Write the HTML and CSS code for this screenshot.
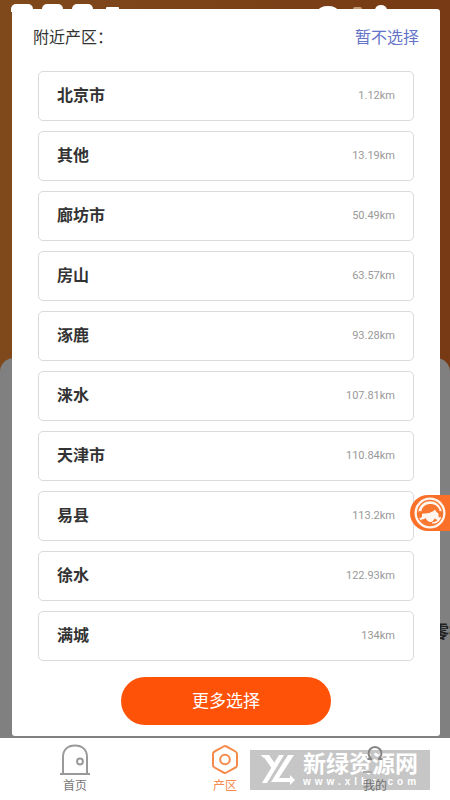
FILE: index.html
```
<!DOCTYPE html>
<html lang="zh-CN">
<head>
<meta charset="utf-8">
<meta name="viewport" content="width=device-width, initial-scale=1">
<title>附近产区</title>
<link rel="stylesheet" href="styles.css">
</head>
<body>
<main class="stage">
  <div class="sheet"></div>
  <svg class="status" viewBox="0 0 450 12" preserveAspectRatio="none" aria-hidden="true">
    <g fill="#fff">
      <rect x="11" y="4" width="22" height="12" rx="5"/>
      <rect x="42" y="4" width="21" height="12" rx="5"/>
      <rect x="72" y="4" width="21" height="12" rx="5"/>
      <rect x="106" y="7" width="13" height="5" rx="1"/>
      <ellipse cx="328" cy="11" rx="10" ry="5"/>
      <ellipse cx="381" cy="10" rx="6" ry="5"/>
    </g>
    <rect x="353" y="7" width="9" height="4" rx="2" fill="#c29b7c"/>
  </svg>
  <span class="peek">零担</span>
  <section class="dialog" role="dialog" aria-labelledby="dialog-title">
    <header class="dialog-head">
      <h1 id="dialog-title">附近产区：</h1>
      <button class="skip" type="button">暂不选择</button>
    </header>
    <ul class="areas">
      <li><button class="area" type="button"><b>北京市</b><span>1.12km</span></button></li>
      <li><button class="area" type="button"><b>其他</b><span>13.19km</span></button></li>
      <li><button class="area" type="button"><b>廊坊市</b><span>50.49km</span></button></li>
      <li><button class="area" type="button"><b>房山</b><span>63.57km</span></button></li>
      <li><button class="area" type="button"><b>涿鹿</b><span>93.28km</span></button></li>
      <li><button class="area" type="button"><b>涞水</b><span>107.81km</span></button></li>
      <li><button class="area" type="button"><b>天津市</b><span>110.84km</span></button></li>
      <li><button class="area" type="button"><b>易县</b><span>113.2km</span></button></li>
      <li><button class="area" type="button"><b>徐水</b><span>122.93km</span></button></li>
      <li><button class="area" type="button"><b>满城</b><span>134km</span></button></li>
    </ul>
    <button class="more" type="button">更多选择</button>
  </section>
  <button class="service" type="button" aria-label="客服">
    <svg viewBox="0 0 32 32" aria-hidden="true">
      <circle cx="16" cy="16" r="15.500" fill="#fff7ef"/>
      <circle cx="16" cy="16" r="13.200" fill="#f9762f"/>
      <circle cx="16" cy="16" r="11.800" fill="#fff7ef"/>
      <path d="M7 17c0-6.500 4-10 9.500-10S26 10.500 26 17c-2-.5-4-2-5-4.500C18.500 15.500 13.500 16.500 10 16.500z" fill="#f9762f"/>
      <path d="M6.500 23c2.500-.5 4-1 5-2 1.500 2.500 3 4 5 4s3-1.500 4-3.500l3 1.500c-1.500 3-4 5-7.500 5s-7-1.500-9.500-5z" fill="#f9762f"/>
      <rect x="4" y="14" width="4" height="7" rx="2" fill="#f9762f"/>
      <rect x="24.500" y="14" width="4" height="7" rx="2" fill="#f9762f"/>
      <path d="M26.500 20c-1 3.500-4 5.800-8.500 5.800" fill="none" stroke="#fff7ef" stroke-width="1.300"/>
    </svg>
  </button>
</main>
<nav class="tabs">
  <a class="tab" href="#home">
    <svg viewBox="0 0 32 32" fill="none" stroke="#999" stroke-width="2" aria-hidden="true">
      <path d="M1 30h30M4 30V13C4 6 8.500 1.500 16 1.500S28 6 28 13v17"/>
      <circle cx="21" cy="17.500" r="2.900"/>
    </svg>
    <span>首页</span>
  </a>
  <a class="tab tab-on" href="#area" aria-current="page">
    <svg viewBox="0 0 32 32" fill="none" stroke="#f58b4b" stroke-width="2" stroke-linejoin="round" aria-hidden="true">
      <path d="M14.500 2.500q1.500-.8 3 0l9 5q1.500.8 1.500 2.500v11q0 1.700-1.500 2.500l-9 5q-1.500.8-3 0l-9-5Q4 22.700 4 21V10q0-1.700 1.500-2.500z"/>
      <circle cx="16" cy="15.500" r="4.800"/>
    </svg>
    <span>产区</span>
  </a>
  <a class="tab tab-mine" href="#mine">
    <svg viewBox="0 0 32 32" fill="none" stroke="#858585" stroke-width="2" aria-hidden="true">
      <path d="M12.500 15a6.500 6.500 0 1 1 7 0M8.500 15h4.500M19 15h4.500"/>
      <path d="M4 28h9" stroke="#aaa"/>
    </svg>
    <span>我的</span>
  </a>
</nav>
<aside class="mark">
  <svg viewBox="0 0 36 32" aria-hidden="true">
    <g fill="#fff">
      <path d="M1 1h8l7 10-3 5L4.500 4z"/>
      <path d="M19 1h5L7 29H2z"/>
      <path d="M28 1h6L19 24h11v-3l5 5-5 5v-3H11z"/>
      <path d="M1 1h8l1.500 2.500H3z"/>
    </g>
  </svg>
  <div class="mark-text"><strong>新绿资源网</strong><small>www.xlhs.com</small></div>
</aside>
</body>
</html>
```
FILE: styles.css
```
* { box-sizing: border-box; }

body {
  margin: 0;
  min-height: 100vh;
  display: flex;
  flex-direction: column;
  position: relative;
  overflow-x: hidden;
  background: #fff;
  font-family: Roboto, "Noto Sans CJK SC", sans-serif;
  color: #333;
}

button {
  font: inherit;
  border: 0;
  padding: 0;
  background: none;
  cursor: pointer;
}

.stage {
  flex: 1;
  position: relative;
  overflow: hidden;
  display: flex;
  padding: 9px 10px 2px 12px;
  background: linear-gradient(90deg, #7f491b, #773a14);
}

.sheet {
  position: absolute;
  inset: 358px 0 0;
  border-radius: 14px 14px 0 0;
  background: #808080;
}

.status {
  position: absolute;
  top: 0;
  left: 0;
  width: 100%;
  height: 12px;
}

.peek {
  position: absolute;
  top: 620px;
  left: calc(100% - 18px);
  font-size: 17px;
  line-height: 24px;
  font-weight: 700;
  white-space: nowrap;
  color: #222;
}

.dialog {
  position: relative;
  flex: 1;
  display: flex;
  flex-direction: column;
  padding: 15px 26px 11px;
  border-radius: 3px;
  background: #fff;
}

.dialog-head {
  display: flex;
  justify-content: space-between;
  align-items: center;
  height: 24px;
  margin: 0 -5px 23px;
  font-size: 16px;
}

.dialog-head h1 {
  margin: 0;
  font-size: 16px;
  font-weight: 400;
}

.skip { color: #6474c8; }

.areas {
  list-style: none;
  margin: 0;
  padding: 0;
  display: grid;
  gap: 10px;
}

.area {
  width: 100%;
  height: 50px;
  display: flex;
  justify-content: space-between;
  align-items: center;
  padding: 0 18px;
  border: 1px solid #dadada;
  border-radius: 5px;
  color: #333;
}

.area b {
  font-size: 16px;
  line-height: 24px;
}

.area span {
  font-size: 11px;
  line-height: 14px;
  color: #999;
}

.more {
  align-self: center;
  width: 210px;
  height: 48px;
  margin-top: 16px;
  border-radius: 24px;
  background: #ff5209;
  color: #fff;
  font-size: 17px;
  line-height: 24px;
}

.service {
  position: absolute;
  top: 495px;
  right: 0;
  width: 40px;
  height: 36px;
  padding: 2px 4px;
  border-radius: 18px 0 0 18px;
  background: #fa7029;
}

.service svg {
  display: block;
  width: 32px;
  height: 32px;
}

.tabs {
  position: relative;
  z-index: 2;
  height: 62px;
  display: grid;
  grid-template-columns: repeat(3, 1fr);
}

.tab {
  display: flex;
  flex-direction: column;
  align-items: center;
  padding-top: 6px;
  color: #777;
  font-size: 12px;
  line-height: 20px;
  text-decoration: none;
}

.tab svg {
  width: 32px;
  height: 32px;
}

.tab-on { color: #f58b4b; }

.tab-mine { color: #707070; }

.mark {
  position: absolute;
  z-index: 1;
  right: 20px;
  bottom: 10px;
  width: 180px;
  height: 40px;
  display: flex;
  align-items: center;
  gap: 7px;
  padding-left: 10px;
  background: #c6c6c6;
  color: #fff;
}

.mark svg {
  width: 36px;
  height: 32px;
}

.mark-text {
  display: flex;
  flex-direction: column;
}

.mark strong {
  font-size: 23px;
  line-height: 24px;
  font-weight: 700;
}

.mark small {
  font-family: "Liberation Sans", sans-serif;
  font-size: 10px;
  line-height: 10px;
  font-weight: 700;
  letter-spacing: 4px;
}
```
